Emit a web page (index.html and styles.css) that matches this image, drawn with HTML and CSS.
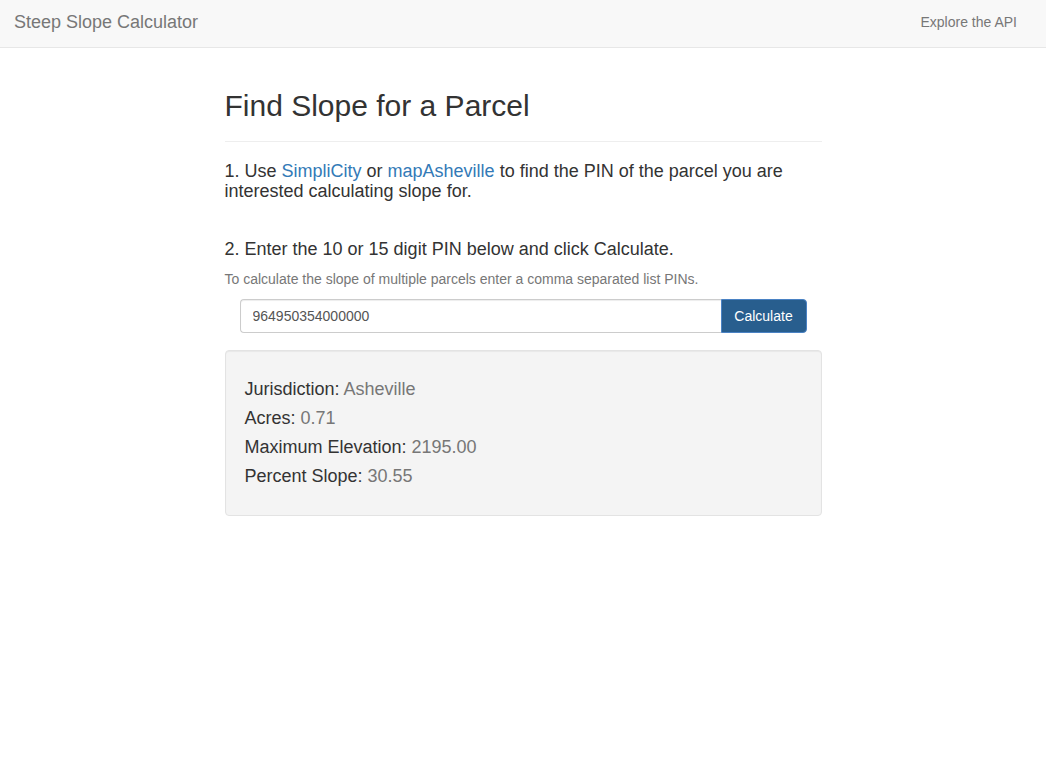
FILE: index.html
```html
<!DOCTYPE html>
<html lang="en">
<head>
<meta charset="utf-8">
<title>Steep Slope Calculator</title>
<link rel="stylesheet" href="styles.css">
</head>
<body>
<nav class="navbar">
  <a class="brand" href="#">Steep Slope Calculator</a>
  <a class="nav-link" href="#">Explore the API</a>
</nav>
<main class="content">
  <div class="page-header">
    <h2>Find Slope for a Parcel</h2>
  </div>
  <h4 class="step">1. Use <a href="#">SimpliCity</a> or <a href="#">mapAsheville</a> to find the PIN of the parcel you are interested calculating slope for.</h4>
  <h4 class="step step-two">2. Enter the 10 or 15 digit PIN below and click Calculate.</h4>
  <p class="help">To calculate the slope of multiple parcels enter a comma separated list PINs.</p>
  <form class="pin-form">
    <div class="input-group">
      <input class="pin-input" type="text" value="964950354000000">
      <button class="btn" type="button">Calculate</button>
    </div>
  </form>
  <div class="well">
    <h4 class="result">Jurisdiction: <span class="val">Asheville</span></h4>
    <h4 class="result">Acres: <span class="val">0.71</span></h4>
    <h4 class="result">Maximum Elevation: <span class="val">2195.00</span></h4>
    <h4 class="result">Percent Slope: <span class="val">30.55</span></h4>
  </div>
</main>
</body>
</html>
```
FILE: styles.css
```css
* { box-sizing: border-box; }
html, body {
  margin: 0;
  padding: 0;
  background: #fff;
  font-family: "Liberation Sans", Arial, Helvetica, sans-serif;
  font-size: 14px;
  line-height: 1.42857;
  color: #333;
}
a { color: #337ab7; text-decoration: none; }

.navbar {
  height: 48px;
  background: #f8f8f8;
  border-bottom: 1px solid #e7e7e7;
  display: flex;
  align-items: center;
  justify-content: space-between;
  padding: 0 29px 0 14px;
}
.brand {
  color: #777;
  font-size: 18px;
  line-height: 20px;
  margin-top: -3px;
}
.nav-link {
  color: #777;
  font-size: 14px;
  line-height: 20px;
  margin-top: -3px;
}

.content {
  width: 597px;
  margin: 0 auto;
}

.page-header {
  margin: 41px 0 20px;
  padding-bottom: 9px;
  border-bottom: 1px solid #eee;
}
.page-header h2 {
  margin: 20px 0 10px;
  font-size: 30px;
  font-weight: 500;
  line-height: 1.1;
}

.step {
  font-size: 18px;
  font-weight: 500;
  line-height: 1.1;
  margin: 10px 0;
}
.step-two { margin-top: 38px; }

.help {
  color: #777;
  margin: 0 0 10px;
  font-size: 14px;
  line-height: 20px;
}

.pin-form {
  padding: 0 15px;
  margin: 0 0 17px;
}
.input-group {
  display: flex;
  height: 34px;
  margin-top: 1px;
}
.pin-input {
  flex: 1;
  height: 34px;
  border: 1px solid #ccc;
  border-right: 0;
  border-radius: 4px 0 0 4px;
  padding: 6px 12px;
  font-family: inherit;
  font-size: 14px;
  color: #555;
  box-shadow: inset 0 1px 1px rgba(0,0,0,.075);
}
.btn {
  width: 86px;
  height: 34px;
  background: #285e8e;
  border: 1px solid #4a82c4;
  border-radius: 0 4px 4px 0;
  color: #fff;
  font-family: inherit;
  font-size: 14px;
  padding: 6px 12px;
}

.well {
  background: #f4f4f4;
  border: 1px solid #e3e3e3;
  border-radius: 4px;
  padding: 19px;
  box-shadow: inset 0 1px 1px rgba(0,0,0,.05);
}
.result {
  font-size: 18px;
  font-weight: 500;
  line-height: 19px;
  margin: 10px 0;
}
.val { color: #777; }
```
